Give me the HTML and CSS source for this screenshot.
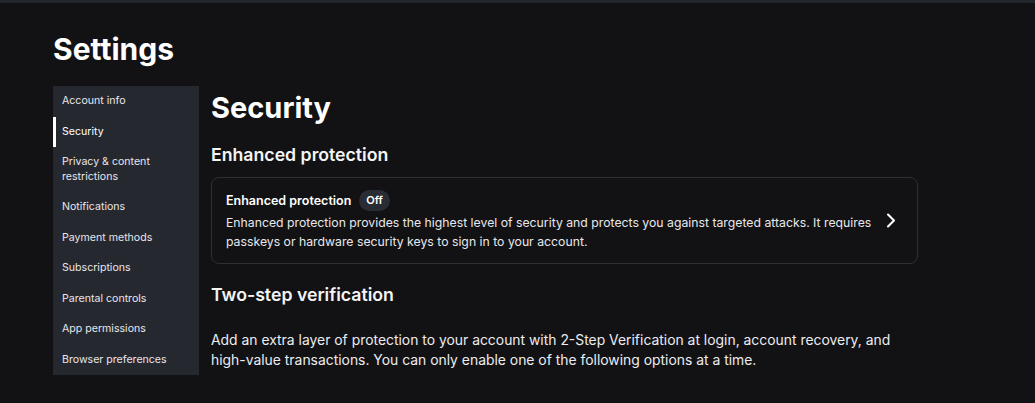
FILE: index.html
```html
<!DOCTYPE html>
<html lang="en">
<head>
<meta charset="utf-8">
<title>Settings</title>
<link rel="stylesheet" href="styles.css">
</head>
<body>
<div class="topbar"></div>
<div class="page">
  <h1 class="page-title">Settings</h1>
  <div class="layout">
    <nav class="sidebar">
      <a class="nav-item">Account info</a>
      <a class="nav-item active">Security</a>
      <a class="nav-item">Privacy &amp; content restrictions</a>
      <a class="nav-item">Notifications</a>
      <a class="nav-item">Payment methods</a>
      <a class="nav-item">Subscriptions</a>
      <a class="nav-item">Parental controls</a>
      <a class="nav-item">App permissions</a>
      <a class="nav-item">Browser preferences</a>
    </nav>
    <main class="content">
      <h2 class="section-title">Security</h2>
      <h3 class="sub-title">Enhanced protection</h3>
      <div class="card">
        <div class="card-body">
          <div class="card-head">
            <span class="card-title">Enhanced protection</span>
            <span class="pill">Off</span>
          </div>
          <p class="card-desc">Enhanced protection provides the highest level of security and protects you against targeted attacks. It requires passkeys or hardware security keys to sign in to your account.</p>
        </div>
        <svg class="chevron" width="10" height="15" viewBox="0 0 10 15" aria-hidden="true"><path d="M2 1.5l6 6-6 6" fill="none" stroke="#fff" stroke-width="2.1" stroke-linecap="round" stroke-linejoin="round"/></svg>
      </div>
      <h3 class="sub-title two-step">Two-step verification</h3>
      <p class="body-text">Add an extra layer of protection to your account with 2-Step Verification at login, account recovery, and high-value transactions. You can only enable one of the following options at a time.</p>
    </main>
  </div>
</div>
</body>
</html>
```
FILE: styles.css
```css
* { box-sizing: border-box; }
html, body { margin: 0; padding: 0; }
body {
  background: #121214;
  color: #f2f2f4;
  font-family: Inter, "Noto Sans", sans-serif;
  height: 403px;
  overflow: hidden;
}
.topbar {
  height: 3px;
  background: #23252d;
}
.page {
  padding-left: 53px;
}
.page-title {
  margin: 28px 0 0;
  font-size: 30px;
  line-height: 36px;
  font-weight: 700;
  color: #ffffff;
}
.layout {
  display: flex;
  gap: 12px;
  margin-top: 19px;
}
.sidebar {
  width: 146px;
  height: 289px;
  background: #262830;
  display: flex;
  flex-direction: column;
}
.nav-item {
  display: block;
  padding: 8px 8px 8px 6px;
  border-left: 3px solid transparent;
  font-size: 10.6px;
  line-height: 14.5px;
  color: #e6e6ea;
}
.nav-item.active {
  border-left-color: #ffffff;
  color: #ffffff;
}
.content {
  width: 707px;
}
.section-title {
  margin: 3.5px 0 0;
  font-size: 29px;
  line-height: 36px;
  font-weight: 700;
  color: #ffffff;
}
.sub-title {
  margin: 17px 0 0;
  font-size: 17.7px;
  line-height: 24px;
  font-weight: 600;
  color: #f4f4f6;
}
.card {
  margin-top: 10.5px;
  border: 1px solid #2d2f37;
  border-radius: 8px;
  padding: 12px 21px 12.5px 14px;
  display: flex;
  align-items: center;
  gap: 14px;
  background: #121214;
}
.card-body { flex: 1; }
.card-head {
  display: flex;
  align-items: center;
  gap: 8px;
  height: 21px;
}
.card-title {
  font-size: 12.5px;
  font-weight: 600;
  line-height: 20px;
  color: #ffffff;
}
.pill {
  background: #2a2c34;
  border-radius: 11px;
  padding: 0 7px;
  height: 21px;
  font-size: 11px;
  font-weight: 600;
  line-height: 21px;
  color: #ffffff;
}
.card-desc {
  margin: 1.5px 0 0;
  font-size: 12.25px;
  line-height: 19px;
  color: #e8e8ec;
}
.chevron { flex: none; }
.two-step {
  margin-top: 19px;
}
.body-text {
  margin: 22.5px 0 0;
  font-size: 13.9px;
  line-height: 20px;
  color: #ececf0;
}
```
